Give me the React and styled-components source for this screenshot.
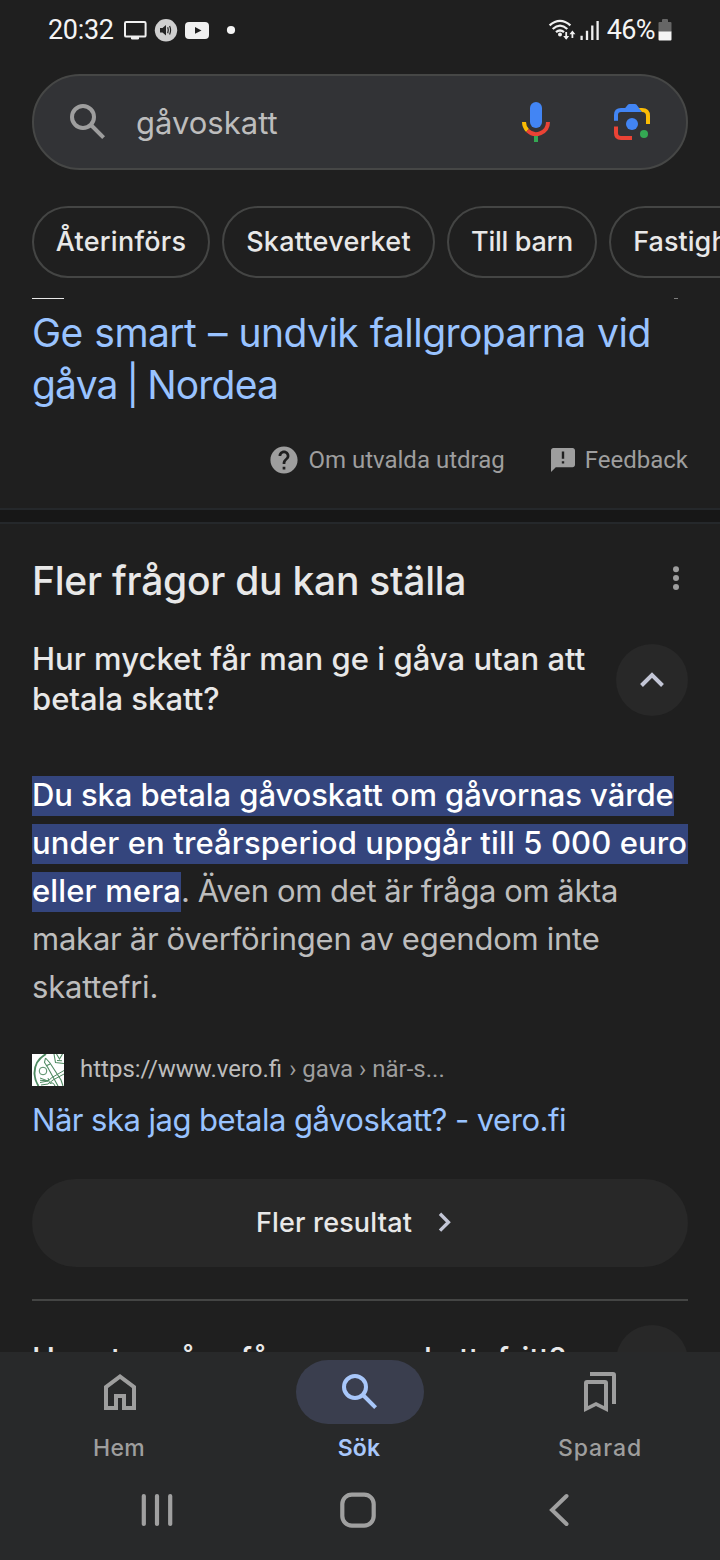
import React from 'react'
import styled, { createGlobalStyle } from 'styled-components'


const GlobalStyle = createGlobalStyle`
* { box-sizing: border-box; }
body {
   margin: 0;
   background: #1f1f1f;
   font-family: Inter, "Liberation Sans", sans-serif;
}
`
const Screen = styled.div`
width: 720px;
height: 1560px;
display: flex;
flex-direction: column;
overflow: hidden;
background: #1f1f1f;
color: #e8e8e8;
`
const Icon = styled.svg`
display: block;
flex: none;
width: ${props => props.$w}px;
height: ${props => props.$h || props.$w}px;
`

/* status bar */
const StatusBar = styled.div`
height: 60px;
padding: 0 48px;
display: flex;
align-items: center;
flex: none;
color: #f4f4f4;
font-family: Roboto, sans-serif;
font-size: 27px;
`
const Clock = styled.span`
width: 66px;
margin-right: 10px;
letter-spacing: -0.3px;
`
const StatusIcons = styled.div`
flex: 1;
display: flex;
align-items: center;
`
const Battery = styled.span`
margin: 0 3px 0 8px;
letter-spacing: -0.6px;
`

/* search */
const SearchBar = styled.div`
height: 96px;
margin: 14px 32px 36px;
padding: 0 30px;
display: flex;
align-items: center;
flex: none;
background: #323336;
border: 2px solid #464746;
border-radius: 48px;
`
const Query = styled.span`
flex: 1;
margin-left: 24px;
padding-top: 2px;
color: #bdbdbd;
font-size: 31px;
line-height: 48px;
`
const SearchActions = styled.div`
display: flex;
gap: 48px;
`
const Chips = styled.div`
height: 72px;
padding-left: 32px;
display: flex;
gap: 12px;
flex: none;
overflow: hidden;
`
const Chip = styled.button`
width: ${props => props.$w}px;
flex: none;
padding: 0 0 2px;
background: none;
border: 2px solid #444544;
border-radius: 36px;
color: #e8e8e8;
font-family: inherit;
font-size: 27px;
font-weight: 500;
letter-spacing: ${props => props.$ls}px;
`

/* results, scrolled under the chips and the bottom bar */
const Results = styled.main`
flex: 1;
min-height: 0;
margin-top: 20px;
overflow: hidden;
`
const CutRow = styled.div`
height: 1px;
margin: 0 42px 0 32px;
display: flex;
justify-content: space-between;
`
const CutMark = styled.span`
width: ${props => props.$w}px;
background: ${props => props.$color};
`
const Line = styled.span`
display: block;
white-space: nowrap;
letter-spacing: ${props => props.$ls || 0}px;
word-spacing: ${props => props.$ws || 0}px;
`
const ResultTitle = styled.h2`
margin: 8px 32px 0;
color: #99c3ff;
font-size: 39px;
font-weight: 400;
line-height: 52px;
`
const SnippetLinks = styled.div`
height: 97px;
padding: 0 32px;
display: flex;
justify-content: flex-end;
align-items: center;
color: #9e9e9e;
font-family: Roboto, sans-serif;
font-size: 24px;
`
const SnippetLink = styled.span`
display: flex;
align-items: center;
gap: 10px;
margin-left: ${props => props.$left || 0}px;
`
const SectionGap = styled.div`
height: 16px;
background: #171717;
border-top: 2px solid #25282b;
border-bottom: 2px solid #25282b;
`
const SectionHead = styled.div`
height: 52px;
margin: 31px 0 32px;
padding: 0 32px;
display: flex;
justify-content: space-between;
`
const SectionTitle = styled.h2`
margin: 0;
font-size: 39px;
font-weight: 500;
line-height: 52px;
`
const Question = styled.div`
padding: 0 32px;
display: flex;
justify-content: space-between;
font-size: 31px;
font-weight: 500;
line-height: 40px;
`
const QuestionText = styled.div`
padding-top: ${props => props.$top || 0}px;
`
const Toggle = styled.button`
width: 72px;
height: 72px;
margin-top: ${props => props.$top || 0}px;
padding: 0;
display: flex;
flex: none;
justify-content: center;
align-items: center;
background: #282828;
border: none;
border-radius: 50%;
`
const Answer = styled.p`
margin: 52px 32px 0;
color: #bdbdbd;
font-size: 31px;
line-height: 48px;
`
const Mark = styled.mark`
display: inline-block;
width: ${props => props.$w}px;
height: 40px;
background: #34457d;
color: #fff;
font-weight: 500;
line-height: 38px;
letter-spacing: ${props => props.$ls}px;
word-spacing: 0;
`
const Source = styled.div`
height: 32px;
margin: 43px 32px 10px;
display: flex;
align-items: center;
gap: 16px;
`
const Url = styled.span`
padding-bottom: 2px;
color: #bdbdbd;
font-family: Roboto, sans-serif;
font-size: 24px;
line-height: 30px;
`
const Path = styled.span`
margin-left: 1px;
color: #9e9e9e;
`
const SourceTitle = styled.h3`
margin: 0 32px;
color: #99c3ff;
font-size: 31px;
font-weight: 400;
line-height: 48px;
`
const MoreButton = styled.button`
width: 656px;
height: 88px;
margin: 35px 32px 32px;
padding: 0 12px 2px 0;
display: flex;
justify-content: center;
align-items: center;
gap: 26px;
background: #282828;
border: none;
border-radius: 44px;
color: #e8e8e8;
font-family: inherit;
font-size: 27px;
font-weight: 500;
letter-spacing: 0.17px;
`
const Rule = styled.div`
height: 2px;
margin: 0 32px 24px;
background: #444544;
`

/* bottom bars */
const BottomBar = styled.div`
height: 208px;
flex: none;
background: #28292a;
`
const Tabs = styled.nav`
height: 108px;
padding-top: 8px;
display: grid;
grid-template-columns: repeat(3, 240px);
`
const Tab = styled.div`
display: flex;
flex-direction: column;
align-items: center;
color: ${props => props.$active ? '#a8c7fa' : '#9e9e9e'};
`
const TabPill = styled.span`
width: 128px;
height: 64px;
display: flex;
justify-content: center;
align-items: center;
border-radius: 32px;
background: ${props => props.$active ? '#3a3e4e' : 'none'};
`
const TabLabel = styled.span`
padding-right: ${props => props.$right || 0}px;
font-size: 23px;
font-weight: ${props => props.$active ? 600 : 500};
letter-spacing: ${props => props.$ls}px;
line-height: 48px;
`
const SystemKeys = styled.div`
height: 100px;
padding: 32px 0 0 139px;
display: flex;
`
const SystemKey = styled.span`
width: ${props => props.$w}px;
`

const SearchIcon = () => (
   <Icon $w={48} viewBox="0 0 24 24" fill="none" stroke="currentColor" strokeWidth="2">
      <circle cx="9.5" cy="9.5" r="5.5" />
      <path d="M13.5 13.5l6.3 6.3" />
   </Icon>
)

const SearchGlyph = styled.span`
color: #9e9e9e;
`

const chips = [
   { label: 'Återinförs', w: 178, ls: 0.25 },
   { label: 'Skatteverket', w: 213, ls: 0.24 },
   { label: 'Till barn', w: 150, ls: -0.3 },
   { label: 'Fastighet', w: 168, ls: 0.05 },
]

const App = () => {
   return (
      <Screen>
         <GlobalStyle />
         <StatusBar>
            <Clock>20:32</Clock>
            <StatusIcons>
               <Icon $w={112} $h={26} viewBox="124 16 112 26">
                  <rect x="125" y="21" width="20.6" height="14.6" rx="1.2" fill="none" stroke="#f0f0f0" strokeWidth="2" />
                  <path d="M131 36h8v1.2q0 1.3-1.3 1.3h-5.4q-1.3 0-1.3-1.3z" fill="#f0f0f0" />
                  <circle cx="166" cy="29.3" r="11.2" fill="#cfcfcf" />
                  <path d="M160 27h2.5l3.5-3v10.5l-3.5-3h-2.5z" fill="#222" />
                  <path d="M167.7 26.2q1.3 3 0 6M169.6 25q2 4.2 0 8.5" fill="none" stroke="#222" strokeWidth="1.2" />
                  <rect x="185" y="21" width="24" height="17" rx="4" fill="#f0f0f0" />
                  <path d="M195 26l6.5 3.4-6.5 3.4z" fill="#1f1f1f" />
                  <circle cx="231" cy="29" r="4.1" fill="#f4f4f4" />
               </Icon>
            </StatusIcons>
            <Icon $w={51} $h={24} viewBox="547 17 51 24" fill="none" stroke="#f0f0f0">
               <path d="M548.6 24.4Q559 15.3 569.4 24.4M551.7 28Q559 21.3 566.3 28M555 31.2Q559 27.8 563 31.2" strokeWidth="2.3" />
               <circle cx="559" cy="33.6" r="2" fill="#f0f0f0" stroke="none" />
               <path d="M565.2 31v6.5M571.4 37v-6" strokeWidth="1.8" />
               <path d="M562.2 35l3 3.8 3-3.8zM568.4 33.2l3-3.8 3 3.800z" fill="#f0f0f0" stroke="none" />
               <path d="M580.6 39v-4.2M586 39v-9.2M591.3 39v-14.5M596.6 39v-19" strokeWidth="2.3" />
            </Icon>
            <Battery>46%</Battery>
            <Icon $w={14} $h={22} viewBox="0 0 14 22">
               <path d="M4 1q0-1 1-1h4q1 0 1 1v2h2.5q1 0 1 1v9h-13v-9q0-1 1-1H4z" fill="#666" />
               <path d="M.5 12.500h13v8q0 1-1 1h-11q-1 0-1-1z" fill="#f4f4f4" />
            </Icon>
         </StatusBar>

         <SearchBar>
            <SearchGlyph><SearchIcon /></SearchGlyph>
            <Query>gåvoskatt</Query>
            <SearchActions>
               <Icon $w={48} viewBox="0 0 24 24">
                  <rect x="9" y="2" width="6" height="13" rx="3" fill="#4285f4" />
                  <path d="M6 12a6 6 0 0 0 1.76 4.24" fill="none" stroke="#fbbc04" strokeWidth="2" />
                  <path d="M7.76 16.24A6 6 0 0 0 18 12" fill="none" stroke="#ea4335" strokeWidth="2" />
                  <path d="M11 19h2v3h-2z" fill="#34a853" />
               </Icon>
               <Icon $w={48} viewBox="0 0 24 24">
                  <path d="M4 11.4V8.5Q4 6 6.5 6H14" fill="none" stroke="#4285f4" strokeWidth="2" />
                  <path d="M8.6 5L10 3.3q.3-.3.7-.3h2.8q.4 0 .7.3L17 7H8.6z" fill="#4285f4" />
                  <path d="M15.4 5H17q4 0 4 4v4h-2V9q0-2-2-2z" fill="#fbbc04" />
                  <path d="M4 14.3v3.2Q4 20 6.5 20H12" fill="none" stroke="#ea4335" strokeWidth="2" />
                  <circle cx="12" cy="13" r="3" fill="#4285f4" />
                  <circle cx="18" cy="18" r="2" fill="#34a853" />
               </Icon>
            </SearchActions>
         </SearchBar>

         <Chips>
            {chips.map((c) => (
               <Chip key={c.label} $w={c.w} $ls={c.ls}>{c.label}</Chip>
            ))}
         </Chips>

         <Results>
            <CutRow>
               <CutMark $w={32} $color="#e8e8e8" />
               <CutMark $w={4} $color="#7d7d7d" />
            </CutRow>
            <ResultTitle>
               <Line $ls={-0.55} $ws={1.2}>Ge smart – undvik fallgroparna vid</Line>
               <Line $ls={-0.8} $ws={-1.5}>gåva | Nordea</Line>
            </ResultTitle>
            <SnippetLinks>
               <SnippetLink>
                  <Icon $w={28} viewBox="1.7 1.7 20.6 20.6">
                     <path fill="#9e9e9e" d="M12 2C6.48 2 2 6.48 2 12s4.48 10 10 10 10-4.48 10-10S17.52 2 12 2zm1 17h-2v-2h2v2zm2.07-7.75l-.9.92C13.45 12.9 13 13.5 13 15h-2v-.5c0-1.1.45-2.1 1.17-2.83l1.24-1.26c.37-.36.59-.86.59-1.41 0-1.1-.9-2-2-2s-2 .9-2 2H8c0-2.210 1.79-4 4-4s4 1.79 4 4c0 .88-.36 1.68-.93 2.25z" />
                  </Icon>
                  Om utvalda utdrag
               </SnippetLink>
               <SnippetLink $left={46}>
                  <Icon $w={24} viewBox="2 2 20 20">
                     <path fill="#9e9e9e" d="M20 2H4c-1.1 0-1.99.9-1.99 2L2 22l4-4h14c1.1 0 2-.9 2-2V4c0-1.1-.9-2-2-2zm-7 13h-2v-2h2v2zm0-4h-2V5h2v6z" />
                  </Icon>
                  Feedback
               </SnippetLink>
            </SnippetLinks>
            <SectionGap />

            <SectionHead>
               <SectionTitle><Line $ls={-0.25}>Fler frågor du kan ställa</Line></SectionTitle>
               <Icon $w={24} $h={46} viewBox="0 0 24 46" fill="#9e9e9e">
                  <circle cx="12" cy="14.3" r="3" />
                  <circle cx="12" cy="23" r="3" />
                  <circle cx="12" cy="32" r="3" />
               </Icon>
            </SectionHead>
            <Question>
               <QuestionText>
                  <Line $ls={0.03}>Hur mycket får man ge i gåva utan att</Line>
                  <Line>betala skatt?</Line>
               </QuestionText>
               <Toggle $top={5}>
                  <Icon $w={26} $h={18} viewBox="0 0 26 18" fill="none" stroke="#c3c6d6" strokeWidth="4">
                     <path d="M2.5 14.5L13 4l10.5 10.5" />
                  </Icon>
               </Toggle>
            </Question>
            <Answer>
               <Line><Mark $w={642} $ls={-0.09}>Du ska betala gåvoskatt om gåvornas värde</Mark></Line>
               <Line><Mark $w={656} $ls={0.13}>under en treårsperiod uppgår till 5 000 euro</Mark></Line>
               <Line $ls={-0.31} $ws={-0.4}><Mark $w={149} $ls={0.14}>eller mera</Mark>. Även om det är fråga om äkta</Line>
               <Line $ls={-0.22} $ws={-0.3}>makar är överföringen av egendom inte</Line>
               <Line $ls={-0.2}>skattefri.</Line>
            </Answer>
            <Source>
               <Icon $w={32} viewBox="0 0 32 32" fill="none" stroke="#4f8a62">
                  <rect width="32" height="32" fill="#fff" stroke="none" />
                  <path d="M14 0Q2 7 2.5 20Q3 27 6.5 32" strokeWidth="1.9" />
                  <circle cx="11" cy="17" r="3.8" strokeWidth="1" />
                  <path d="M13.5 4l4.500 5 11 17 2 6M13.500 4l-1 4.500 3 4.500L26 32M14 12l4-2" strokeWidth="1.1" />
                  <path d="M32 16.5l-12 7-4 3.5-8 1.5M32 20l-11 6-5 4-7 1M8 24l8 3M8 26.3l8 .5M16 24l1.5 5" strokeWidth="1" />
                  <path d="M22 0l1.5 8.5 8.5 1M24.5 0l3 5 3-5M25 6.5l5 .3M18 29.5q3-2 5 2.5" strokeWidth="1.1" />
               </Icon>
               <Url>https://www.vero.fi<Path> › gava › när-s...</Path></Url>
            </Source>
            <SourceTitle><Line $ls={-0.45} $ws={-0.3}>När ska jag betala gåvoskatt? - vero.fi</Line></SourceTitle>
            <MoreButton>
               Fler resultat
               <Icon $w={14} $h={20} viewBox="0 0 14 20" fill="none" stroke="#c3c6d6" strokeWidth="3.4">
                  <path d="M2 1.8L10.4 10.2 2 18.6" />
               </Icon>
            </MoreButton>
            <Rule />
            <Question>
               <QuestionText $top={14}>
                  <Line $ls={0.03}>Hur stor gåva får man ge skattefritt?</Line>
               </QuestionText>
               <Toggle />
            </Question>
         </Results>

         <BottomBar>
            <Tabs>
               <Tab>
                  <TabPill>
                     <Icon $w={48} viewBox="0 0 24 24" fill="currentColor">
                        <path d="M6 19h3v-6h6v6h3v-9l-6-4.5L6 10zm-2 2V9l8-6 8 6v12h-7v-6h-2v6z" />
                     </Icon>
                  </TabPill>
                  <TabLabel $ls={0.3} $right={2}>Hem</TabLabel>
               </Tab>
               <Tab $active>
                  <TabPill $active>
                     <SearchIcon />
                  </TabPill>
                  <TabLabel $active $ls={0.1} $right={2}>Sök</TabLabel>
               </Tab>
               <Tab>
                  <TabPill>
                     <Icon $w={48} viewBox="0 0 24 24" fill="currentColor">
                        <path d="M4 22V7.5Q4 6 5.5 6h9Q16 6 16 7.5V22l-6-3zm2-3.05l4-1.95 4 1.95V8H6z" />
                        <path d="M18 18V4H7V2h11.5Q20 2 20 3.5V18z" />
                     </Icon>
                  </TabPill>
                  <TabLabel $ls={0.95}>Sparad</TabLabel>
               </Tab>
            </Tabs>
            <SystemKeys>
               <SystemKey $w={201}>
                  <Icon $w={36} viewBox="0 0 36 36" stroke="#a0a0a0" strokeWidth="4.2" strokeLinecap="round">
                     <path d="M4.8 4v28M18 4v28M31.2 4v28" />
                  </Icon>
               </SystemKey>
               <SystemKey $w={208}>
                  <Icon $w={36} viewBox="0 0 36 36" fill="none" stroke="#a0a0a0" strokeWidth="4.2">
                     <rect x="2.3" y="2.6" width="31.4" height="31" rx="9.5" />
                  </Icon>
               </SystemKey>
               <SystemKey $w={24}>
                  <Icon $w={24} $h={36} viewBox="0 0 24 36" fill="none" stroke="#a0a0a0" strokeWidth="4" strokeLinecap="round">
                     <path d="M18.5 4L4 18l14.5 14" />
                  </Icon>
               </SystemKey>
            </SystemKeys>
         </BottomBar>
      </Screen>
   )
}

export default App
